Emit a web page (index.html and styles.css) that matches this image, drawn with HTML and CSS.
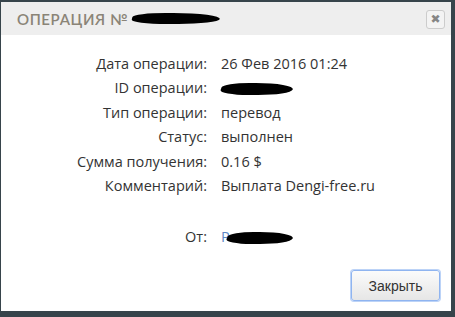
FILE: index.html
```html
<!DOCTYPE html>
<html lang="ru">
<head>
  <meta charset="UTF-8" />
  <title>Операция</title>
  <link rel="stylesheet" href="styles.css">
</head>
<body>
  <div class="dialog">
    <div class="dialog-head">
      <span class="dialog-title">Операция №</span>
      <span class="mark mark-title"></span>
      <button class="close-x" aria-label="close">&#10006;</button>
    </div>

    <div class="dialog-body">
      <div class="info">
        <span class="lbl">Дата операции:</span>
        <span class="val">26 Фев 2016 01:24</span>

        <span class="lbl">ID операции:</span>
        <span class="val"><span class="mark mark-id"></span></span>

        <span class="lbl">Тип операции:</span>
        <span class="val">перевод</span>

        <span class="lbl">Статус:</span>
        <span class="val">выполнен</span>

        <span class="lbl">Сумма получения:</span>
        <span class="val">0.16 $</span>

        <span class="lbl">Комментарий:</span>
        <span class="val">Выплата Dengi-free.ru</span>

        <span class="lbl from">От:</span>
        <span class="val from"><span class="p">P</span><span class="mark mark-from"></span></span>
      </div>
    </div>

    <div class="dialog-foot">
      <button class="btn-close">Закрыть</button>
    </div>
  </div>
</body>
</html>
```

FILE: styles.css
```css
* {
  margin: 0;
  padding: 0;
  box-sizing: border-box;
}
html, body {
  background: #37444b;
  font-family: 'Open Sans', 'Lato', sans-serif;
  color: #333;
}
body {
  padding: 2px 4px 6px 1px;
  height: 317px;
}

.dialog {
  background: #fff;
  height: 309px;
  display: flex;
  flex-direction: column;
}

.dialog-head {
  background: #eeeeee;
  height: 33px;
  display: flex;
  align-items: center;
  padding: 0 6px 0 16px;
}
.dialog-title {
  text-transform: uppercase;
  font-family: 'Lato', sans-serif;
  font-size: 15px;
  font-weight: 600;
  letter-spacing: 0.6px;
  color: #8a8477;
}
.close-x {
  margin-left: auto;
  margin-top: 2px;
  width: 19px;
  height: 19px;
  border: 1px solid #ccc;
  border-radius: 3px;
  background: #f3f3f3;
  color: #858585;
  font-size: 12px;
  font-weight: bold;
  line-height: 17px;
  text-align: center;
  font-family: 'DejaVu Sans', sans-serif;
}

.mark {
  display: inline-block;
  background: #000;
  border-radius: 40% 60% 50% 45%;
}
.mark-title {
  width: 88px;
  height: 11px;
  margin-left: 4px;
  transform: skewX(-15deg);
}
.mark-id {
  width: 72px;
  height: 12px;
  vertical-align: middle;
  transform: skewX(-20deg);
}
.mark-from {
  width: 66px;
  height: 12px;
  vertical-align: middle;
  margin-left: -3px;
  transform: skewX(-25deg);
}

.dialog-body {
  padding-top: 16px;
  flex: 1;
}
.info {
  display: grid;
  grid-template-columns: 206px auto;
  column-gap: 14px;
  grid-auto-rows: 24.5px;
  align-items: center;
  font-size: 14.5px;
}
.lbl {
  text-align: right;
}
.from {
  margin-top: 53px;
}
.p {
  color: #5b86c4;
}

.dialog-foot {
  display: flex;
  justify-content: flex-end;
  padding: 0 11px 10px 0;
}
.btn-close {
  width: 89px;
  height: 31px;
  font-family: 'Liberation Sans', Arial, sans-serif;
  font-size: 14px;
  color: #333;
  border: 1px solid #8fb4f0;
  border-radius: 3px;
  background: linear-gradient(#fbfbfb, #e6e6e6);
  box-shadow: 0 0 0 1px #bcd3f7;
}
```
